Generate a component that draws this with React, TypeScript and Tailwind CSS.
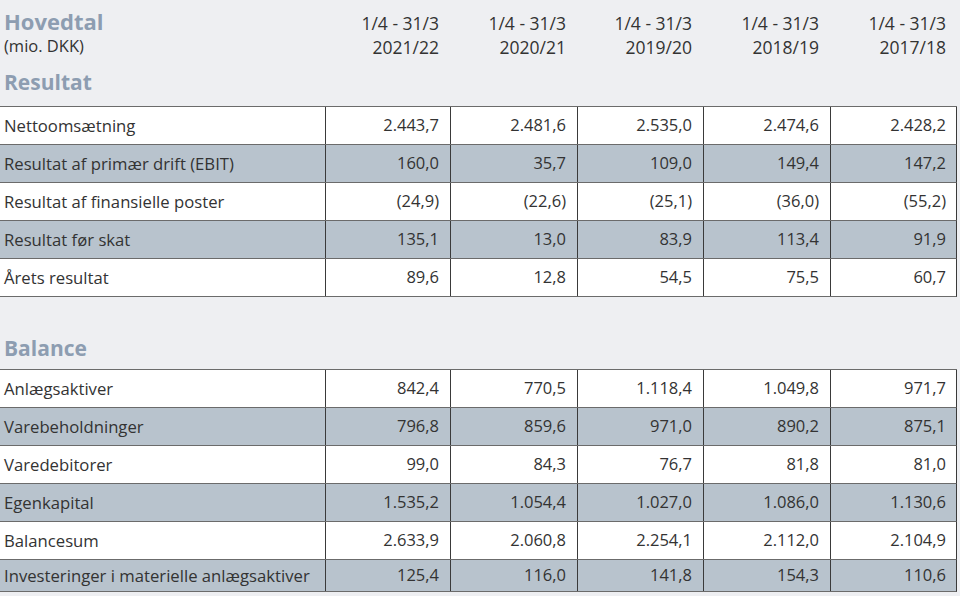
import React from 'react'

type Row = { label: string; values: string[] }

const periods = ['2021/22', '2020/21', '2019/20', '2018/19', '2017/18']

const resultat: Row[] = [
  { label: 'Nettoomsætning', values: ['2.443,7', '2.481,6', '2.535,0', '2.474,6', '2.428,2'] },
  { label: 'Resultat af primær drift (EBIT)', values: ['160,0', '35,7', '109,0', '149,4', '147,2'] },
  { label: 'Resultat af finansielle poster', values: ['(24,9)', '(22,6)', '(25,1)', '(36,0)', '(55,2)'] },
  { label: 'Resultat før skat', values: ['135,1', '13,0', '83,9', '113,4', '91,9'] },
  { label: 'Årets resultat', values: ['89,6', '12,8', '54,5', '75,5', '60,7'] },
]

const balance: Row[] = [
  { label: 'Anlægsaktiver', values: ['842,4', '770,5', '1.118,4', '1.049,8', '971,7'] },
  { label: 'Varebeholdninger', values: ['796,8', '859,6', '971,0', '890,2', '875,1'] },
  { label: 'Varedebitorer', values: ['99,0', '84,3', '76,7', '81,8', '81,0'] },
  { label: 'Egenkapital', values: ['1.535,2', '1.054,4', '1.027,0', '1.086,0', '1.130,6'] },
  { label: 'Balancesum', values: ['2.633,9', '2.060,8', '2.254,1', '2.112,0', '2.104,9'] },
  { label: 'Investeringer i materielle anlægsaktiver', values: ['125,4', '116,0', '141,8', '154,3', '110,6'] },
]

const cols = 'grid grid-cols-[325px_125px_127px_126px_127px_127px]'

const DataTable = ({ rows, lastShort }: { rows: Row[]; lastShort?: boolean }) => (
  <div className="w-[957px] border-t border-[#6b6b6b]">
    {rows.map((r, i) => (
      <div
        key={r.label}
        className={`${cols} ${lastShort && i === rows.length - 1 ? 'h-[32px]' : 'h-[38px]'} border-b border-[#6b6b6b] border-r border-r-[#3a3a3a] ${i % 2 === 1 ? 'bg-[#b8c3cd]' : 'bg-white'}`}
      >
        <div className="flex items-center pl-[4px] text-[16.7px] text-[#333]">{r.label}</div>
        {r.values.map((v, j) => (
          <div key={j} className="flex items-center justify-end pr-[11px] border-l border-[#3a3a3a] text-[16.5px] text-[#333]">
            {v}
          </div>
        ))}
      </div>
    ))}
  </div>
)

export default function App() {
  return (
    <div className="w-[960px] h-[596px] overflow-hidden bg-[#eeeff2]" style={{ fontFamily: '"Open Sans", Lato, sans-serif' }}>
      <div className={`${cols} pt-[7px] h-[64px]`}>
        <div className="pl-[4px]">
          <div className="text-[22px] font-bold leading-[29px] text-[#8d9db1]">Hovedtal</div>
          <div className="text-[16.5px] leading-[20px] text-[#333]">(mio. DKK)</div>
        </div>
        {periods.map((p) => (
          <div key={p} className="pt-[4px] pr-[11px] text-right text-[17.5px] leading-[24px] text-[#333]">
            <div>1/4 - 31/3</div>
            <div>{p}</div>
          </div>
        ))}
      </div>
      <div className="h-[42px] pl-[4px] pt-[5px] text-[21px] font-bold leading-[26px] text-[#8d9db1]">Resultat</div>
      <DataTable rows={resultat} />
      <div className="h-[72px] flex items-end pl-[4px] pb-[8px] text-[21px] font-bold leading-[26px] text-[#8d9db1]">Balance</div>
      <DataTable rows={balance} lastShort />
    </div>
  )
}
